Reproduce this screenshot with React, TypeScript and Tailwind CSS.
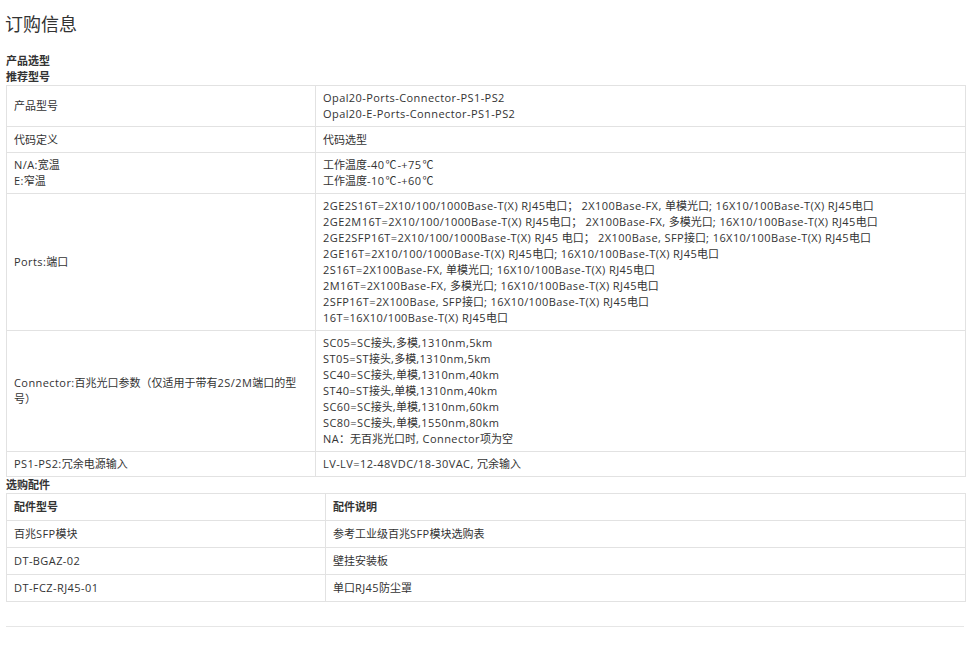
const font = "font-['Open_Sans','Noto_Sans_CJK_SC',sans-serif]"

const selectionRows = [
  { label: ['产品型号'], value: ['Opal20-Ports-Connector-PS1-PS2', 'Opal20-E-Ports-Connector-PS1-PS2'], height: 'h-[41px]' },
  { label: ['代码定义'], value: ['代码选型'], height: 'h-[26px]' },
  { label: ['N/A:宽温', 'E:窄温'], value: ['工作温度-40℃-+75℃', '工作温度-10℃-+60℃'], height: 'h-[41px]' },
  {
    label: ['Ports:端口'],
    value: [
      '2GE2S16T=2X10/100/1000Base-T(X) RJ45电口； 2X100Base-FX, 单模光口; 16X10/100Base-T(X) RJ45电口',
      '2GE2M16T=2X10/100/1000Base-T(X) RJ45电口； 2X100Base-FX, 多模光口; 16X10/100Base-T(X) RJ45电口',
      '2GE2SFP16T=2X10/100/1000Base-T(X) RJ45 电口； 2X100Base, SFP接口; 16X10/100Base-T(X) RJ45电口',
      '2GE16T=2X10/100/1000Base-T(X) RJ45电口; 16X10/100Base-T(X) RJ45电口',
      '2S16T=2X100Base-FX, 单模光口; 16X10/100Base-T(X) RJ45电口',
      '2M16T=2X100Base-FX, 多模光口; 16X10/100Base-T(X) RJ45电口',
      '2SFP16T=2X100Base, SFP接口; 16X10/100Base-T(X) RJ45电口',
      '16T=16X10/100Base-T(X) RJ45电口',
    ],
    height: 'h-[137px]',
  },
  {
    label: ['Connector:百兆光口参数（仅适用于带有2S/2M端口的型', '号）'],
    value: [
      'SC05=SC接头,多模,1310nm,5km',
      'ST05=ST接头,多模,1310nm,5km',
      'SC40=SC接头,单模,1310nm,40km',
      'ST40=ST接头,单模,1310nm,40km',
      'SC60=SC接头,单模,1310nm,60km',
      'SC80=SC接头,单模,1550nm,80km',
      'NA：无百兆光口时, Connector项为空',
    ],
    height: 'h-[121px]',
  },
  { label: ['PS1-PS2:冗余电源输入'], value: ['LV-LV=12-48VDC/18-30VAC, 冗余输入'], height: 'h-[25px]' },
]

const accessoryRows = [
  ['百兆SFP模块', '参考工业级百兆SFP模块选购表'],
  ['DT-BGAZ-02', '壁挂安装板'],
  ['DT-FCZ-RJ45-01', '单口RJ45防尘罩'],
]

// latin runs are set wider than the han ones in the reference
function Mixed({ text }: { text: string }) {
  const parts = text.split(/([\u4e00-\u9fff；：（）]+|℃)/)
  return (
    <>
      {parts.map((part, i) => {
        if (part === '℃') return <span key={i} className="px-px">{part}</span>
        return i % 2 === 0 ? (
          <span key={i} className="tracking-[0.42px]">{part}</span>
        ) : (
          <span key={i}>{part}</span>
        )
      })}
    </>
  )
}

export default function App() {
  return (
    <div className={`${font} bg-white w-[970px] h-[648px] px-[6px] text-[11px] leading-[16px] text-[#333] overflow-hidden`}>
      <h2 className="pt-[14px] -ml-px text-[18px] leading-[21px] font-normal text-[#333]">订购信息</h2>

      <div className="mt-[18px] font-bold">
        <p>产品选型</p>
        <p>推荐型号</p>
      </div>

      {/* 推荐型号 */}
      <table className="w-[960px] table-fixed border-collapse">
        <colgroup>
          <col className="w-[309px]" />
          <col />
        </colgroup>
        <tbody>
          {selectionRows.map((row) => (
            <tr key={row.label[0]} className={row.height}>
              <td className="border border-[#e2e2e2] pl-[7px] pr-2 py-0 align-middle">
                {row.label.map((line) => (
                  <div key={line} className="whitespace-nowrap"><Mixed text={line} /></div>
                ))}
              </td>
              <td className="border border-[#e2e2e2] pl-[7px] pr-2 py-0 align-middle">
                {row.value.map((line) => (
                  <div key={line} className="whitespace-nowrap"><Mixed text={line} /></div>
                ))}
              </td>
            </tr>
          ))}
        </tbody>
      </table>

      <p className="font-bold">选购配件</p>

      {/* 选购配件 */}
      <table className="w-[960px] table-fixed border-collapse">
        <colgroup>
          <col className="w-[319px]" />
          <col />
        </colgroup>
        <tbody>
          <tr className="h-[27px] font-bold">
            <td className="border border-[#e2e2e2] pl-[7px] pr-2 py-0">配件型号</td>
            <td className="border border-[#e2e2e2] pl-[7px] pr-2 py-0">配件说明</td>
          </tr>
          {accessoryRows.map((row) => (
            <tr key={row[0]} className="h-[27px]">
              <td className="border border-[#e2e2e2] pl-[7px] pr-2 py-0"><Mixed text={row[0]} /></td>
              <td className="border border-[#e2e2e2] pl-[7px] pr-2 py-0"><Mixed text={row[1]} /></td>
            </tr>
          ))}
        </tbody>
      </table>

      <div className="mt-[24px] border-t border-[#e6e6e6]" />
    </div>
  )
}
